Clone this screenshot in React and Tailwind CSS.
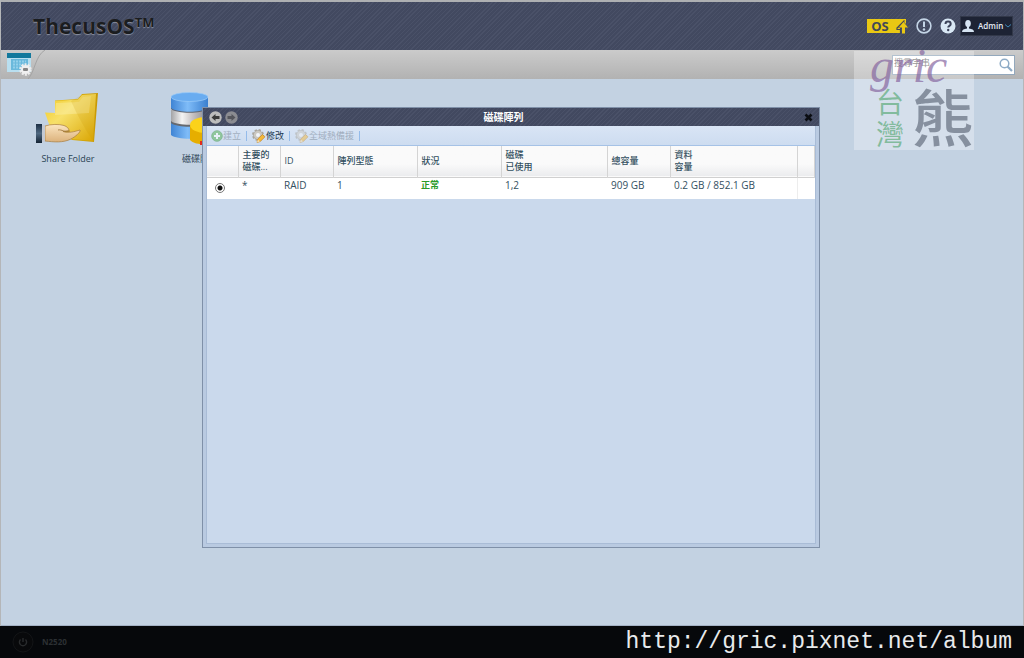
import React, { useState } from 'react';

const hatch =
  'bg-[#444b62] bg-[repeating-linear-gradient(135deg,#424960_0px,#424960_2px,#4a5168_2px,#4a5168_3px)]';

const disks = [
  {
    id: 'RAID',
    master: '*',
    level: '1',
    status: '正常',
    used: '1,2',
    total: '909 GB',
    data: '0.2 GB / 852.1 GB',
  },
];

const FolderIcon = () => (
  <svg width="64" height="54" viewBox="0 0 64 54" aria-hidden="true">
    <defs>
      <linearGradient id="folder" x1="0" y1="0" x2="1" y2="1">
        <stop offset="0" stopColor="#f0c81e" />
        <stop offset="0.4" stopColor="#f7e06a" />
        <stop offset="1" stopColor="#d9a400" />
      </linearGradient>
      <linearGradient id="folderBack" x1="0" y1="0" x2="1" y2="0">
        <stop offset="0" stopColor="#e3b90f" />
        <stop offset="1" stopColor="#c99a05" />
      </linearGradient>
      <linearGradient id="skin" x1="0" y1="0" x2="0" y2="1">
        <stop offset="0" stopColor="#fbe5c0" />
        <stop offset="1" stopColor="#dcb27c" />
      </linearGradient>
      <linearGradient id="cuff" x1="0" y1="0" x2="0" y2="1">
        <stop offset="0" stopColor="#1d3045" />
        <stop offset="0.5" stopColor="#4f6880" />
        <stop offset="1" stopColor="#142333" />
      </linearGradient>
    </defs>
    <path d="M19 8.500l23-1.500 4-5 16-1-4 49-22-2-17-15z" fill="url(#folderBack)" />
    <path d="M9 20.500l10 .5V9l23-1.500 4-4.500 14-1-3 47-21-2-22-12z" fill="url(#folder)" />
    <path d="M19 23l34-2 2-17-8 1-4 5-23 1z" fill="#fdf3b4" opacity=".4" />
    <path d="M35 9c6 14 14 28 22 40l4-47-15 1z" fill="#c99400" opacity=".18" />
    <path
      d="M9 34c6-2 14-2 19-.5 3 1 5 3 5 5l-6 1c5 2 12 0 17-1.500 1 2-5 7-9 9-8 4-17 3-26 2z"
      fill="url(#skin)"
      stroke="#a87c3e"
      strokeWidth=".7"
    />
    <path d="M22 38c4-1 6 3 12 1" fill="none" stroke="#9b7136" strokeWidth=".8" />
    <rect x="0" y="32" width="6" height="19" fill="url(#cuff)" />
    <rect x="6" y="33" width="3" height="17" fill="#c3c9d3" />
  </svg>
);

const RaidIcon = () => (
  <svg width="60" height="54" viewBox="0 0 60 54" aria-hidden="true">
    <defs>
      <linearGradient id="blueDisk" x1="0" y1="0" x2="1" y2="0">
        <stop offset="0" stopColor="#3f84d4" />
        <stop offset="0.45" stopColor="#7fbcf8" />
        <stop offset="1" stopColor="#3a7fcf" />
      </linearGradient>
      <linearGradient id="greyDisk" x1="0" y1="0" x2="1" y2="0">
        <stop offset="0" stopColor="#a3a3a5" />
        <stop offset="0.3" stopColor="#f4f4f4" />
        <stop offset="0.6" stopColor="#c4bfc0" />
        <stop offset="1" stopColor="#85858a" />
      </linearGradient>
    </defs>
    <path d="M1 31v12c6 5 31 5 37 0V31z" fill="url(#blueDisk)" />
    <path d="M1 18v13c6 5 31 5 37 0V18z" fill="#66696f" />
    <path d="M1 18v11c6 5 31 5 37 0V18z" fill="url(#greyDisk)" />
    <path d="M1 5v12c6 5 31 5 37 0V5z" fill="#5e6470" />
    <path d="M1 5v11c6 5 31 5 37 0V5z" fill="url(#blueDisk)" />
    <ellipse cx="19.500" cy="5" rx="18.500" ry="4.500" fill="#69acf0" stroke="#9ccbf8" strokeWidth=".7" />
    <path d="M20 34v14c5 6 26 6 32 0V34z" fill="#e6ae00" />
    <ellipse cx="36" cy="33" rx="16" ry="8" fill="#fbd21a" />
    <rect x="30" y="49" width="6" height="4" fill="#e32b1d" />
  </svg>
);

const CalendarIcon = () => (
  <svg width="26" height="24" viewBox="0 0 26 24" aria-hidden="true">
    <rect x="0" y="1" width="24" height="18" fill="#b9dff0" />
    <rect x="0" y="0" width="24" height="5" fill="#12789c" />
    <rect x="4" y="6" width="17" height="11" fill="#6ab9dc" />
    <path d="M6 8.500h13M6 11.500h13M6 14.500h13" stroke="#93d0ea" strokeWidth="2" strokeDasharray="2 1" />
    <circle cx="18.500" cy="16.500" r="5" fill="none" stroke="#ececec" strokeWidth="2.400" strokeDasharray="2 1.140" />
    <circle cx="18.500" cy="16.500" r="4.600" fill="#f0f0f0" />
    <rect x="16" y="15" width="5" height="3" rx="1" fill="#858585" />
  </svg>
);

const GearIcon = () => (
  <svg width="14" height="14" viewBox="0 0 14 14" aria-hidden="true">
    <circle cx="6" cy="6" r="5" fill="none" stroke="#a9a69e" strokeWidth="2" strokeDasharray="2.200 1.730" />
    <circle cx="6" cy="6" r="4.600" fill="#cbc8c0" stroke="#a09c93" strokeWidth=".6" />
    <circle cx="6" cy="6" r="2" fill="#f1f4f8" />
    <path d="M5 13.500l.8-3.500 4.700-4.500 2.500 2.300-4.700 4.700z" fill="#f4b93a" stroke="#b9781c" strokeWidth=".6" />
    <path d="M5 13.500l.8-3 2.200 2z" fill="#f6dfb3" />
  </svg>
);

const AddIcon = () => (
  <svg width="12" height="12" viewBox="0 0 12 12" aria-hidden="true">
    <circle cx="6" cy="6" r="5.300" fill="#4fae4a" stroke="#2f8a32" strokeWidth=".8" />
    <path d="M6 3v6M3 6h6" stroke="#fff" strokeWidth="2" />
  </svg>
);

const NavArrow = ({ back }) => (
  <svg width="13" height="13" viewBox="0 0 13 13" aria-hidden="true">
    <circle cx="6.500" cy="6.500" r="6.200" fill={back ? '#bcbcbc' : '#8b8c91'} />
    <path
      d={back ? 'M2.500 6.500l4-3.500v2h4v3h-4v2z' : 'M10.500 6.500l-4-3.500v2h-4v3h4v2z'}
      fill={back ? '#3a3a3a' : '#55565c'}
    />
  </svg>
);

const ToolbarButton = ({ icon, label, disabled }) => (
  <button
    type="button"
    disabled={disabled}
    className="flex items-center text-[9px] leading-3 text-[#1d3a52] disabled:text-[#6f7c8c] disabled:opacity-50"
  >
    {icon}
    <span>{label}</span>
  </button>
);

const Divider = () => <span className="h-[10px] w-px bg-[#94bbea]"></span>;

const TopBar = () => (
  <header className={`flex h-[50px] items-center justify-between border-t-2 border-[#aeb0b2] pr-[10px] pl-8 ${hatch}`}>
    <h1 className="flex text-[21px] leading-7 font-bold text-[#1b1d20] [text-shadow:0_1px_1px_#8a90a0]">
      ThecusOS<span className="text-[13px] leading-5">TM</span>
    </h1>
    <div className="flex items-center">
      <button type="button" aria-label="OS" className="mr-2 flex h-4 items-center">
        <span className="flex h-[14px] w-[26px] items-center justify-center bg-[#e9c813] text-[13px] leading-[14px] font-bold text-[#414759]">
          OS
        </span>
        <svg width="15" height="16" viewBox="0 0 15 16" aria-hidden="true">
          <path d="M0 1h13v5l-2-2-6 6H7v5H0z" fill="#e9c813" />
          <path d="M11.500 2.500L4 10v1.500h3.500V16" fill="none" stroke="#414759" strokeWidth="1.200" />
          <path d="M10.500 4l4.500 5.500h-3v6H9v-6H6z" fill="#e9c813" />
        </svg>
      </button>
      <button type="button" aria-label="Alert" className="mr-2">
        <svg width="16" height="16" viewBox="0 0 16 16">
          <circle cx="8" cy="8" r="6.900" fill="none" stroke="#c4d5e6" strokeWidth="1.600" />
          <path d="M8 3.500v5.500" stroke="#c4d5e6" strokeWidth="2" />
          <circle cx="8" cy="11.500" r="1.200" fill="#c4d5e6" />
        </svg>
      </button>
      <button type="button" aria-label="Help" className="mr-1">
        <svg width="16" height="16" viewBox="0 0 16 16">
          <circle cx="8" cy="8" r="7.500" fill="#d9e8f5" />
          <path d="M5.500 6c0-3.200 5.200-3.200 5.200 0 0 1.900-2.500 1.700-2.500 3.500" fill="none" stroke="#3c435a" strokeWidth="2" />
          <circle cx="8.200" cy="12" r="1.200" fill="#3c435a" />
        </svg>
      </button>
      <button
        type="button"
        className="flex h-5 w-[53px] items-center gap-1 border border-[#323849] bg-[#1d2334] pl-px text-[8px] font-semibold text-[#e6edf5]"
      >
        <svg width="12" height="12" viewBox="0 0 12 12" aria-hidden="true">
          <ellipse cx="6" cy="3.500" rx="2.800" ry="3.500" fill="#d6e4f2" />
          <path d="M0 12c0-2.500 2-3 5-3.500V6h2v2.500c3 .5 5 1 5 3.500z" fill="#d6e4f2" />
        </svg>
        Admin
        <svg width="6" height="4" viewBox="0 0 6 4" className="-ml-[2px]" aria-hidden="true">
          <path d="M0 .5l3 2.500 3-2.500" fill="none" stroke="#3f86b6" />
        </svg>
      </button>
    </div>
  </header>
);

const SearchBar = () => {
  const [query, setQuery] = useState('搜尋字串');

  return (
    <nav className="flex h-[29px] items-center justify-between bg-linear-to-b from-[#cbcbcb] to-[#b2b2b2] pr-2 pl-[6px]">
      <div className="flex items-center">
        <button type="button" aria-label="Control panel">
          <CalendarIcon />
        </button>
        <svg width="20" height="29" viewBox="0 0 20 29" className="-ml-2" aria-hidden="true">
          <path d="M3 29C10 22 10 6 20 0" fill="none" stroke="#a4a4a4" />
        </svg>
      </div>
      <label className="flex h-5 w-[123px] items-center border border-[#93a8bc] bg-white pr-px">
        <input
          type="text"
          aria-label="搜尋"
          value={query}
          onChange={(e) => setQuery(e.target.value)}
          className="w-full min-w-0 pb-1 pl-px text-[9px] text-[#6b6b6b] outline-none"
        />
        <svg width="14" height="14" viewBox="0 0 14 14" className="shrink-0" aria-hidden="true">
          <circle cx="5.500" cy="5.500" r="4.300" fill="none" stroke="#8eabc6" strokeWidth="1.500" />
          <path d="M8.500 8.500l4.500 4.500" stroke="#8eabc6" strokeWidth="2.200" />
        </svg>
      </label>
    </nav>
  );
};

const RaidWindow = () => (
  <section className="absolute top-7 left-[201px] flex h-[441px] w-[618px] flex-col border border-[#7f90a8] bg-[#b9cae1]">
    <div className={`flex h-[18px] shrink-0 items-center px-[6px] ${hatch}`}>
      <div className="flex gap-[3px]">
        <button type="button" aria-label="Back">
          <NavArrow back />
        </button>
        <button type="button" aria-label="Forward">
          <NavArrow />
        </button>
      </div>
      <h2 className="flex-1 text-center text-[10px] leading-4 font-bold text-white">磁碟陣列</h2>
      <div className="flex w-11 justify-end">
        <button type="button" aria-label="Close">
          <svg width="9" height="9" viewBox="0 0 9 9">
            <path d="M1.500 1.500l6 6M7.500 1.500l-6 6" stroke="#0b0d12" strokeWidth="2.600" />
          </svg>
        </button>
      </div>
    </div>

    <div className="mx-[3px] mb-[3px] flex flex-1 flex-col border border-t-0 border-[#a9bcd6] bg-[#cad9ec]">
      <div className="flex h-5 items-center gap-[5px] border-b border-[#a5c2e6] bg-linear-to-b from-[#d9e5f5] to-[#cddcf0] pl-1">
        <ToolbarButton icon={<AddIcon />} label="建立" disabled />
        <Divider />
        <ToolbarButton icon={<GearIcon />} label="修改" />
        <Divider />
        <ToolbarButton icon={<GearIcon />} label="全域熱備援" disabled />
        <Divider />
      </div>

      <table className="w-full table-fixed border-collapse bg-white text-left text-[#33505f]">
        <colgroup>
          <col className="w-[31px]" />
          <col className="w-[42px]" />
          <col className="w-[53px]" />
          <col className="w-[84px]" />
          <col className="w-[84px]" />
          <col className="w-[106px]" />
          <col className="w-[63px]" />
          <col className="w-[127px]" />
          <col />
        </colgroup>
        <thead>
          <tr className="h-[31px] border-b border-[#d0d0d0] bg-linear-to-b from-[#fafafa] from-60% to-[#ebecee] text-[9px] leading-3 *:border-r *:border-[#d4d4d4] *:px-1 *:font-medium">
            <th></th>
            <th>主要的<br />磁碟...</th>
            <th>ID</th>
            <th>陣列型態</th>
            <th>狀況</th>
            <th>磁碟<br />已使用</th>
            <th>總容量</th>
            <th>資料<br />容量</th>
            <th></th>
          </tr>
        </thead>
        <tbody>
          {disks.map((disk) => (
            <tr key={disk.id} className="h-[21px] text-[10px] leading-[14px] *:px-1 *:pb-[6px]">
              <td>
                <input
                  type="radio"
                  name="raid"
                  aria-label={disk.id}
                  defaultChecked
                  className="mx-1 mt-[5px] block size-[10px] appearance-none rounded-full border border-[#777] bg-white bg-[radial-gradient(circle,#111_0px,#111_2px,#fff_3px)]"
                />
              </td>
              <td>{disk.master}</td>
              <td>{disk.id}</td>
              <td>{disk.level}</td>
              <td className="text-[9px] font-bold text-[#2a9a2a]">{disk.status}</td>
              <td>{disk.used}</td>
              <td>{disk.total}</td>
              <td className="border-r border-[#ededed]">{disk.data}</td>
              <td></td>
            </tr>
          ))}
        </tbody>
      </table>
    </div>
  </section>
);

const Watermark = () => (
  <div className="pointer-events-none absolute -top-7 right-[49px] flex h-[99px] w-[120px] flex-col justify-between bg-white/30">
    <div className="pl-4 font-['Liberation_Serif'] text-[48px] leading-[30px] text-[#85659f]/70 italic">gric</div>
    <div className="flex items-end justify-end gap-2">
      <div className="w-7 text-[28px] leading-8 text-[#5dab7a]/70">
        台<br />灣
      </div>
      <div className="text-[62px] leading-[64px] font-medium text-[#6b7686]/75">熊</div>
    </div>
  </div>
);

const App = () => {
  return (
    <div className="flex min-h-screen flex-col border-x border-[#b4b6b8] bg-[#c3d2e2] font-['Open_Sans','Noto_Sans_CJK_TC',sans-serif]">
      <TopBar />
      <SearchBar />

      <main className="relative flex flex-1 border-b border-[#a3b1c4] px-px pt-[13px]">
        <a href="#share" className="flex w-[132px] flex-col items-center gap-[6px] text-[9px] text-[#2b4455]">
          <FolderIcon />
          <span>Share Folder</span>
        </a>
        <a href="#raid" className="flex w-[132px] flex-col items-center gap-[6px] text-[9px] text-[#2b4455]">
          <RaidIcon />
          <span>磁碟陣列</span>
        </a>
        <RaidWindow />
        <Watermark />
      </main>

      <footer className="-mx-px flex h-8 items-center justify-between bg-[#06080b] pr-3 pl-3">
        <div className="flex items-center gap-2 text-[8px] font-bold text-[#2c3033]">
          <button type="button" aria-label="Power">
            <svg width="22" height="22" viewBox="0 0 22 22">
              <circle cx="11" cy="11" r="10" fill="#08090b" stroke="#131517" />
              <path d="M8.500 8.500a3.600 3.600 0 1 0 5 0M11 7v4" fill="none" stroke="#292b2d" strokeWidth="1.400" />
            </svg>
          </button>
          N2520
        </div>
        <a href="#album" className="font-['Liberation_Mono',monospace] text-[23px] leading-8 text-[#e8eaec]">
          http://gric.pixnet.net/album
        </a>
      </footer>
    </div>
  );
};

export default App;
